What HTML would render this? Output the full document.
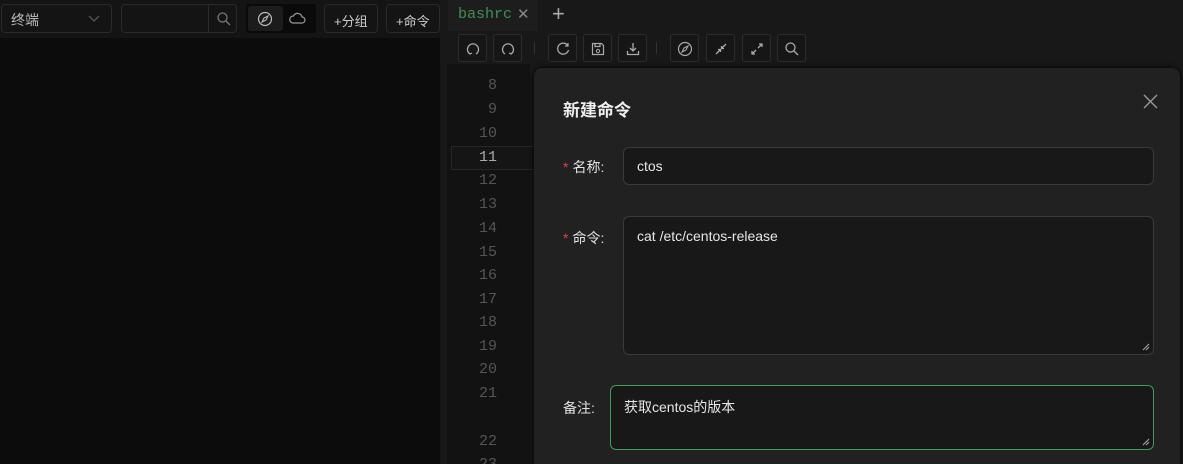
<!DOCTYPE html>
<html><head><meta charset="utf-8"><style>
*{box-sizing:border-box;margin:0;padding:0}
html,body{width:1183px;height:464px;overflow:hidden}
body{background:#141414;font-family:"Liberation Sans","Noto Sans CJK SC",sans-serif;position:relative;color:#ddd}
.abs{position:absolute}
.box{position:absolute;border:1px solid #2a2a2a;border-radius:4px;background:#141414}
.tb{position:absolute;top:34px;width:29px;height:28px;border:1px solid #2c2c2c;border-radius:3px;background:#161616}
.tb svg{position:absolute;left:6px;top:6px}
.ln{position:absolute;width:50px;text-align:right;left:447px;font-family:"Liberation Mono",monospace;font-size:15px;color:#555}
.lbl{position:absolute;font-size:14px;color:#e0e0e0}
.req{color:#d0474f;margin-right:4px}
.inp{position:absolute;background:#181818;border:1px solid #3a3a3a;border-radius:6px;font-size:14px;color:#e6e6e6;padding-left:13px}
.grip{position:absolute;right:3px;bottom:3px}
</style></head><body>
<div class="abs" style="left:0;top:38px;width:440px;height:426px;background:#0c0c0c"></div>
<div class="box" style="left:1px;top:4px;width:111px;height:29px"><span class="abs" style="left:9px;top:5px;font-size:14px;color:#bbb">终端</span>
<svg class="abs" style="left:86px;top:10px" width="12" height="8"><path d="M1 1l5 5 5-5" stroke="#555" fill="none" stroke-width="1.3"/></svg></div>
<div class="box" style="left:121px;top:4px;width:116px;height:29px"><div class="abs" style="left:86px;top:0;width:1px;height:27px;background:#2a2a2a"></div>
<svg class="abs" style="left:94px;top:6px" width="16" height="16"><circle cx="6.5" cy="6.5" r="4.5" stroke="#777" fill="none" stroke-width="1.3"/><path d="M10 10l4 4" stroke="#777" stroke-width="1.3"/></svg></div>
<div class="abs" style="left:246px;top:4px;width:70px;height:29px;background:#0a0a0a;border-radius:3px"><div class="abs" style="left:2px;top:2px;width:35px;height:25px;background:#1c1c1c;border-radius:3px"></div>
<svg class="abs" style="left:11px;top:7px" width="16" height="16"><circle cx="8" cy="8" r="6.5" stroke="#bbb" fill="none" stroke-width="1.2"/><path d="M11 5L9 9 5 11 7 7z" stroke="#bbb" fill="none" stroke-width="1.1"/></svg>
<svg class="abs" style="left:42px;top:8px" width="18" height="14"><path d="M5 11h9a3 3 0 0 0 0-6 4.5 4.5 0 0 0-8.5-1A3.5 3.5 0 0 0 5 11z" stroke="#999" fill="none" stroke-width="1.2"/></svg></div>
<div class="box" style="left:324px;top:4px;width:54px;height:29px"><span class="abs" style="left:9px;top:6px;font-size:13px;color:#ccc">+分组</span></div>
<div class="box" style="left:386px;top:4px;width:54px;height:29px"><span class="abs" style="left:9px;top:6px;font-size:13px;color:#ccc">+命令</span></div>
<div class="abs" style="left:440px;top:0;width:743px;height:464px;background:#181818"></div>
<div class="abs" style="left:448px;top:0;width:90px;height:31px;background:#1d1d1d"></div>
<span class="abs" style="left:458px;top:6px;font-family:'Liberation Mono',monospace;font-size:15px;color:#3f8f55">bashrc</span>
<span class="abs" style="left:517px;top:5px;font-size:15px;color:#888">✕</span>
<span class="abs" style="left:552px;top:1px;font-size:22px;color:#aaa;font-weight:300">+</span>
<div class="tb" style="left:458px"><svg width="16" height="16"><path d="M5 13A5.5 5.5 0 1 1 11 13" stroke="#aaa" fill="none" stroke-width="1.3"/><path d="M3 11l2 2 2-1" stroke="#aaa" fill="none" stroke-width="1.2"/></svg></div>
<div class="tb" style="left:493px"><svg width="16" height="16"><path d="M5 13A5.5 5.5 0 1 1 11 13" stroke="#aaa" fill="none" stroke-width="1.3"/><path d="M13 11l-2 2-2-1" stroke="#aaa" fill="none" stroke-width="1.2"/></svg></div>
<div class="abs" style="left:534px;top:42px;width:1px;height:12px;background:#333"></div>
<div class="tb" style="left:548px"><svg width="16" height="16"><path d="M13 5A5.5 5.5 0 1 0 13.5 9" stroke="#aaa" fill="none" stroke-width="1.3"/><path d="M13 2v3h-3" stroke="#aaa" fill="none" stroke-width="1.2"/></svg></div>
<div class="tb" style="left:583px"><svg width="16" height="16"><path d="M2.5 2.5h9l2 2v9h-11z M5 2.5v3h5v-3" stroke="#aaa" fill="none" stroke-width="1.2"/><circle cx="8" cy="10" r="1.6" stroke="#aaa" fill="none"/></svg></div>
<div class="tb" style="left:618px"><svg width="16" height="16"><path d="M8 2v8M5 7l3 3 3-3M2.5 10v3.5h11V10" stroke="#aaa" fill="none" stroke-width="1.3"/></svg></div>
<div class="abs" style="left:656px;top:42px;width:1px;height:12px;background:#333"></div>
<div class="tb" style="left:670px"><svg width="16" height="16"><circle cx="8" cy="8" r="6.5" stroke="#aaa" fill="none" stroke-width="1.2"/><path d="M11 5L9 9 5 11 7 7z" stroke="#aaa" fill="none" stroke-width="1.1"/></svg></div>
<div class="tb" style="left:706px"><svg width="16" height="16"><path d="M3 13l4-4M13 3l-4 4M5 8.5h2.5V11M11 7.5H8.5V5" stroke="#aaa" fill="none" stroke-width="1.3"/></svg></div>
<div class="tb" style="left:742px"><svg width="16" height="16"><path d="M3 13l4-4M13 3l-4 4M3 10v3h3M13 6V3h-3" stroke="#aaa" fill="none" stroke-width="1.3"/></svg></div>
<div class="tb" style="left:777px"><svg width="16" height="16"><circle cx="6.5" cy="6.5" r="4.5" stroke="#aaa" fill="none" stroke-width="1.3"/><path d="M10 10l4 4" stroke="#aaa" stroke-width="1.3"/></svg></div>
<div class="abs" style="left:447px;top:64px;width:83px;height:400px;background:#121212"></div>
<div class="abs" style="left:451px;top:146px;width:90px;height:24px;border:1px solid #262626;background:#151515"></div>
<div class="ln" style="top:77px">8</div><div class="ln" style="top:101px">9</div><div class="ln" style="top:125px">10</div>
<div class="ln" style="top:149px;color:#aaa">11</div><div class="ln" style="top:172px">12</div><div class="ln" style="top:196px">13</div>
<div class="ln" style="top:220px">14</div><div class="ln" style="top:244px">15</div><div class="ln" style="top:267px">16</div>
<div class="ln" style="top:291px">17</div><div class="ln" style="top:314px">18</div><div class="ln" style="top:338px">19</div>
<div class="ln" style="top:361px">20</div><div class="ln" style="top:385px">21</div><div class="ln" style="top:433px">22</div>
<div class="ln" style="top:456px">23</div>
<div class="abs" style="left:534px;top:68px;width:646px;height:400px;background:#212121;border-radius:8px 8px 0 0;box-shadow:0 0 6px #000"></div>
<span class="abs" style="left:563px;top:96px;font-size:17px;font-weight:bold;color:#eee">新建命令</span>
<svg class="abs" style="left:1143px;top:94px" width="15" height="15"><path d="M1 1l13 13M14 1L1 14" stroke="#999" stroke-width="1.4"/></svg>
<div class="lbl" style="left:563px;top:157px"><span class="req">*</span>名称:</div>
<div class="inp" style="left:623px;top:147px;width:531px;height:38px;line-height:36px">ctos</div>
<div class="lbl" style="left:563px;top:228px"><span class="req">*</span>命令:</div>
<div class="inp" style="left:623px;top:216px;width:531px;height:139px;padding-top:11px">cat /etc/centos-release<svg class="grip" width="8" height="8"><path d="M7 1L1 7M7 4L4 7" stroke="#aaa"/></svg></div>
<div class="lbl" style="left:563px;top:398px">备注:</div>
<div class="inp" style="left:610px;top:385px;width:544px;height:65px;padding-top:11px;border-color:#3f9a5c">获取centos的版本<svg class="grip" width="8" height="8"><path d="M7 1L1 7M7 4L4 7" stroke="#aaa"/></svg></div>
</body></html>
